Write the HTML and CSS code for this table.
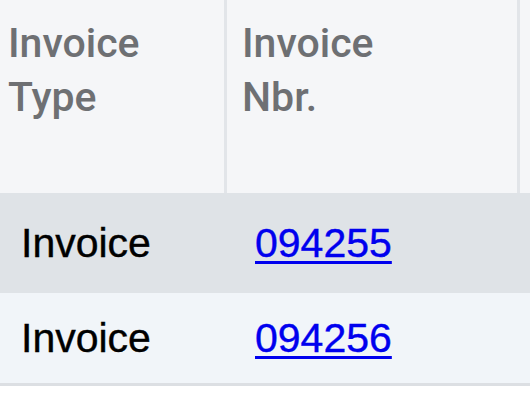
FILE: index.html
```html
<!DOCTYPE html>
<html>
<head>
<meta charset="utf-8">
<link rel="stylesheet" href="styles.css">
</head>
<body>
<table class="grid">
  <colgroup>
    <col class="c-type">
    <col class="c-nbr">
    <col class="c-rest">
  </colgroup>
  <thead>
    <tr class="head-row">
      <th class="hcell">Invoice<br>Type</th>
      <th class="hcell">Invoice<br>Nbr.</th>
      <th class="hcell last"></th>
    </tr>
  </thead>
  <tbody>
    <tr class="row row-hover">
      <td class="cell">Invoice</td>
      <td class="cell link-cell"><a href="#" class="inv-link">094255</a></td>
      <td class="cell"></td>
    </tr>
    <tr class="row row-alt">
      <td class="cell">Invoice</td>
      <td class="cell link-cell"><a href="#" class="inv-link">094256</a></td>
      <td class="cell"></td>
    </tr>
  </tbody>
</table>
</body>
</html>
```
FILE: styles.css
```css
html, body {
  margin: 0;
  padding: 0;
  background: #ffffff;
  overflow: hidden;
}

.grid {
  table-layout: fixed;
  width: 530px;
  border-collapse: separate;
  border-spacing: 0;
}

.c-type { width: 227px; }
.c-nbr { width: 293px; }
.c-rest { width: 10px; }

.head-row { height: 193px; }

.hcell {
  box-sizing: border-box;
  background: #f5f6f8;
  border-right: 3px solid #e2e5e9;
  padding: 16px 0 0 8px;
  text-align: left;
  vertical-align: top;
  font-family: Roboto, "Liberation Sans", sans-serif;
  font-weight: 500;
  font-size: 41px;
  line-height: 54px;
  color: #6e7073;
}

.hcell + .hcell { padding-left: 15px; }
.hcell.last { border-right: none; }

.row .cell {
  box-sizing: border-box;
  padding: 0 0 0 21px;
  vertical-align: middle;
  font-family: "Liberation Sans", Arial, sans-serif;
  font-size: 41px;
  color: #000000;
  -webkit-text-stroke: 0.4px currentColor;
}

.row .link-cell { padding-left: 28px; }

.row-hover { height: 100px; }
.row-hover .cell { background: #dfe3e7; }

.row-alt { height: 93px; }
.row-alt .cell {
  background: #f1f5f9;
  border-bottom: 3px solid #dcdfe3;
}

.inv-link {
  color: #0000ee;
  text-decoration: underline;
  text-decoration-thickness: 3px;
  text-underline-offset: 4px;
}
```
